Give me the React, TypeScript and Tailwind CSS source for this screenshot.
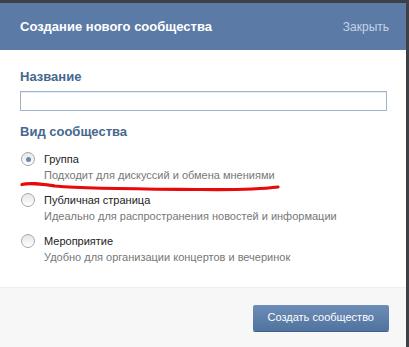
import React, { useState } from 'react';

const options = [
  { id: 'group', title: 'Группа', desc: 'Подходит для дискуссий и обмена мнениями' },
  { id: 'public', title: 'Публичная страница', desc: 'Идеально для распространения новостей и информации' },
  { id: 'event', title: 'Мероприятие', desc: 'Удобно для организации концертов и вечеринок' },
];

function Radio({ checked }: { checked: boolean }) {
  return (
    <span className="w-[14px] h-[14px] rounded-full border border-[#a7a7a7] bg-gradient-to-b from-[#e6e6e6] to-white flex items-center justify-center shrink-0">
      {checked && <span className="w-[5px] h-[5px] rounded-full bg-[#6c87a8]" />}
    </span>
  );
}

export default function App() {
  const [selected, setSelected] = useState('group');
  const [name, setName] = useState('');

  return (
    <div className="w-[409px] h-[347px] flex flex-col bg-[#3d4147] font-['Liberation_Sans',Arial,sans-serif] overflow-hidden">
      <div className="h-[3px] shrink-0" />
      <div className="flex-1 flex flex-col mr-[3px] bg-white relative">
        {/* Header */}
        <div className="h-[47px] shrink-0 bg-[#5b7aa5] flex items-center justify-between pl-[20px] pr-[17px]">
          <h2 className="text-white font-bold text-[13px]">Создание нового сообщества</h2>
          <button className="text-[#c5d4e8] text-[12px]">Закрыть</button>
        </div>

        {/* Body */}
        <div className="flex-1 px-[20px] pt-[19px]">
          <div className="text-[#45688e] font-bold text-[13px] leading-[16px]">Название</div>
          <input
            value={name}
            onChange={e => setName(e.target.value)}
            className="mt-[6px] w-[367px] h-[20px] border border-[#9fb3cc] bg-white outline-none px-1 text-[12px] shadow-[inset_0_1px_0_#e5ecf3]"
          />
          <div className="mt-[12px] text-[#45688e] font-bold text-[13px] leading-[16px]">Вид сообщества</div>

          <div className="mt-[11px] flex flex-col gap-[9px]">
            {options.map(o => (
              <label key={o.id} className="flex cursor-pointer" onClick={() => setSelected(o.id)}>
                <div className="w-[24px] pt-[1px] pl-[1px]">
                  <Radio checked={selected === o.id} />
                </div>
                <div className="flex flex-col">
                  <span className="text-[#222] text-[11px] leading-[16px]">{o.title}</span>
                  <span className="text-[#777] text-[11px] leading-[16px]">{o.desc}</span>
                </div>
              </label>
            ))}
          </div>
        </div>

        {/* Footer */}
        <div className="h-[60px] shrink-0 bg-[#f7f7f7] border-t border-[#eeeeee] flex items-center justify-end pr-[17px]">
          <button className="h-[26px] px-[15px] bg-gradient-to-b from-[#6c8db7] to-[#50739f] text-white text-[11px] rounded-[2px] shadow-[0_1px_0_#3f5f88]">
            Создать сообщество
          </button>
        </div>

        {/* red hand-drawn underline */}
        <svg className="absolute left-0 top-0 pointer-events-none" width="409" height="347">
          <path
            d="M22 181.5 C 30 179.5, 40 181, 55 183 C 90 186, 140 186, 200 186.5 C 240 187, 262 186, 278 184"
            stroke="#e8090b"
            strokeWidth="3.2"
            fill="none"
            strokeLinecap="round"
          />
        </svg>
      </div>
    </div>
  );
}
